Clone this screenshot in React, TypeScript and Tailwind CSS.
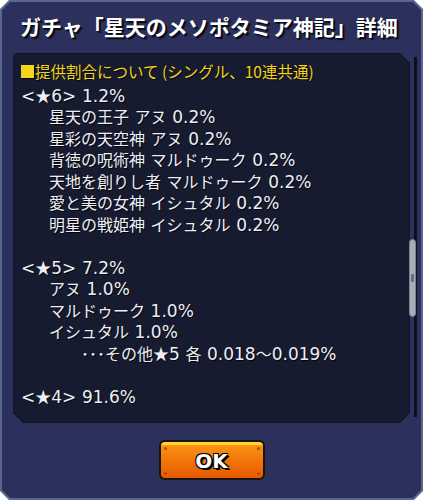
const rows: { text: string; indent: number }[] = [
  { text: '<★6> 1.2%', indent: 0 },
  { text: '星天の王子 アヌ 0.2%', indent: 1 },
  { text: '星彩の天空神 アヌ 0.2%', indent: 1 },
  { text: '背徳の呪術神 マルドゥーク 0.2%', indent: 1 },
  { text: '天地を創りし者 マルドゥーク 0.2%', indent: 1 },
  { text: '愛と美の女神 イシュタル 0.2%', indent: 1 },
  { text: '明星の戦姫神 イシュタル 0.2%', indent: 1 },
  { text: '', indent: 0 },
  { text: '<★5> 7.2%', indent: 0 },
  { text: 'アヌ 1.0%', indent: 1 },
  { text: 'マルドゥーク 1.0%', indent: 1 },
  { text: 'イシュタル 1.0%', indent: 1 },
  { text: '･･･その他★5 各 0.018〜0.019%', indent: 2 },
  { text: '', indent: 0 },
  { text: '<★4> 91.6%', indent: 0 },
];

const cjk = { fontFamily: '"Noto Sans CJK JP", "Noto Sans", sans-serif' };
const latin = { fontFamily: '"DejaVu Sans", "Noto Sans CJK JP", sans-serif' };

// latin runs are drawn a bit larger and wider, like the game's font
function Runs({ text }: { text: string }) {
  const parts = text.split(/([\x21-\x7e]+)/).filter((p) => p !== '');
  return (
    <>
      {parts.map((p, i) =>
        /^[\x21-\x7e]+$/.test(p) ? (
          <span key={i} className="text-[17px] leading-[21.5px]" style={latin}>
            {p}
          </span>
        ) : (
          <span key={i} className="leading-[21.5px]">{p}</span>
        )
      )}
    </>
  );
}

function Row({ text, indent }: { text: string; indent: number }) {
  const pad = indent === 0 ? 'pl-0' : indent === 1 ? 'pl-[28px]' : 'pl-[60px]';
  return (
    <div className={`flex items-baseline h-[21.5px] whitespace-pre [word-spacing:2px] ${pad}`}>
      <Runs text={text} />
    </div>
  );
}

export default function App() {
  return (
    <div
      className="w-[423px] h-[500px] bg-[#5a6692] p-[2px] [clip-path:polygon(9px_0,calc(100%_-_9px)_0,100%_9px,100%_calc(100%_-_9px),calc(100%_-_9px)_100%,9px_100%,0_calc(100%_-_9px),0_9px)]"
      style={cjk}
    >
      <div className="h-full flex flex-col bg-[#2b305d] [clip-path:polygon(8px_0,calc(100%_-_8px)_0,100%_8px,100%_calc(100%_-_8px),calc(100%_-_8px)_100%,8px_100%,0_calc(100%_-_8px),0_8px)]">
        {/* title */}
        <div className="h-[51px] pl-[18px] pt-[9px] text-[21px] font-bold leading-[30px] text-white whitespace-nowrap [text-shadow:1px_1px_0_#0a0c1a,2px_2px_1px_#0a0c1a]">
          ガチャ「星天のメソポタミア神記」詳細
        </div>

        {/* list panel */}
        <div className="flex ml-[11px] h-[370px]">
          <div className="w-[397px] bg-[#0f1428] p-[1px] [clip-path:polygon(3px_0,calc(100%_-_10px)_0,100%_10px,100%_calc(100%_-_10px),calc(100%_-_10px)_100%,10px_100%,0_calc(100%_-_10px),0_3px)]">
            <div className="h-full bg-[#161b30] pl-[7px] pt-[7px] text-[16px] text-[#eeeef4] [text-shadow:1px_1px_0_#05060c] [clip-path:polygon(3px_0,calc(100%_-_10px)_0,100%_10px,100%_calc(100%_-_10px),calc(100%_-_10px)_100%,10px_100%,0_calc(100%_-_10px),0_3px)]">
              <div className="flex items-center h-[21.5px] leading-[21.5px] mb-[2px] whitespace-nowrap text-[15.5px] text-[#f4d41c]">
                <span className="inline-block w-[13px] h-[13px] bg-[#f4d41c] mr-[1px] shadow-[1px_1px_0_#05060c]" />
                提供割合について (シングル、10連共通)
              </div>
              {rows.map((r, i) => (
                <Row key={i} text={r.text} indent={r.indent} />
              ))}
            </div>
          </div>
          {/* scrollbar */}
          <div className="relative w-[8px] ml-[1px] flex justify-center">
            <div className="w-[3px] mt-[4px] mb-[6px] bg-[#0b0e1c]" />
            <div className="absolute left-[-2px] top-[186px] w-[7px] h-[78px] rounded-full bg-[#a9abb8] border border-[#7c7f90] flex items-center justify-center">
              <div className="w-[3px] h-[8px] bg-[#6a6d7c] rounded-[1px]" />
            </div>
          </div>
        </div>

        {/* OK button */}
        <div className="flex justify-center pt-[17px]">
          <div className="w-[106px] h-[40px] rounded-[6px] bg-[#1c1408] p-[2px]">
            <div className="relative h-full rounded-[4px] border-t-[3px] border-[#ffd53c] bg-gradient-to-b from-[#fb9414] via-[#f27308] to-[#e45a00] flex items-center justify-center">
              <span className="absolute left-[3px] top-[2px] w-[3px] h-[3px] rounded-full bg-[#b24a00]" />
              <span className="absolute right-[3px] top-[2px] w-[3px] h-[3px] rounded-full bg-[#b24a00]" />
              <span className="absolute left-[3px] bottom-[3px] w-[3px] h-[3px] rounded-full bg-[#b24a00]" />
              <span className="absolute right-[3px] bottom-[3px] w-[3px] h-[3px] rounded-full bg-[#b24a00]" />
              <span
                className="text-[20px] font-bold text-white leading-none mt-[-2px] [text-shadow:-1px_-1px_0_#000,1px_-1px_0_#000,-1px_1px_0_#000,1px_1px_0_#000,2px_2px_0_#000]"
                style={{ fontFamily: '"DejaVu Sans", sans-serif' }}
              >
                OK
              </span>
            </div>
          </div>
        </div>
      </div>
    </div>
  );
}
